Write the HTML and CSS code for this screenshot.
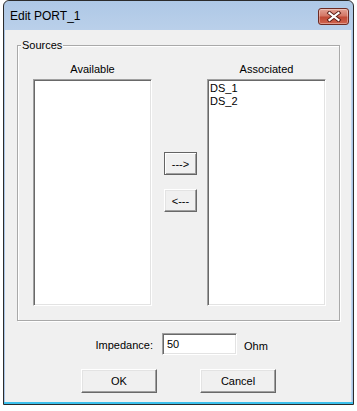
FILE: index.html
```html
<!DOCTYPE html>
<html lang="en">
<head>
    <meta charset="UTF-8">
    <meta name="viewport" content="width=device-width, initial-scale=1.0">
    <title>Edit PORT_1</title>
    <link rel="stylesheet" href="styles.css">
</head>
<body>
    <div class="window">
        <div class="titlebar">
            <span class="title">Edit PORT_1</span>
            <button class="close" type="button" aria-label="Close">
                <svg width="16" height="11" viewBox="0 0 16 11">
                    <path d="M3.5 2 L12.5 9 M12.5 2 L3.5 9" stroke="#5a1d16" stroke-width="4" stroke-linecap="square" fill="none"/>
                    <path d="M3.5 2 L12.5 9 M12.5 2 L3.5 9" stroke="#fff" stroke-width="2.2" stroke-linecap="square" fill="none"/>
                </svg>
            </button>
        </div>
        <div class="client">
            <div class="group">
                <span class="group-title">Sources</span>
                <div class="column">
                    <div class="col-label">Available</div>
                    <div class="listbox"></div>
                </div>
                <div class="mover">
                    <button class="btn small focused" type="button">---&gt;</button>
                    <button class="btn small" type="button">&lt;---</button>
                </div>
                <div class="column">
                    <div class="col-label">Associated</div>
                    <div class="listbox">
                        <div class="item">DS_1</div>
                        <div class="item">DS_2</div>
                    </div>
                </div>
            </div>
            <div class="impedance">
                <label class="imp-label" for="imp">Impedance:</label>
                <input class="field" id="imp" type="text" value="50">
                <span class="unit">Ohm</span>
            </div>
            <div class="actions">
                <button class="btn wide" type="button">OK</button>
                <button class="btn wide" type="button">Cancel</button>
            </div>
        </div>
    </div>
</body>
</html>
```

FILE: styles.css
```css
body {
    margin: 0;
    background: #fff;
    font-family: 'Liberation Sans', Arial, sans-serif;
    font-size: 11px;
    color: #000;
}
.window {
    box-sizing: border-box;
    width: 351px;
    height: 405px;
    margin-left: 3px;
    border: 1px solid #2b2b2b;
    border-radius: 6px 6px 0 0;
    background: linear-gradient(#b3cbe7, #a9c4e4 30px, #a9c4e4);
    padding: 0 1px 2px 1px;
    box-shadow: inset 0 -2px 0 #3cc0ec;
}
.titlebar {
    height: 29px;
    display: flex;
    align-items: center;
    justify-content: space-between;
    padding: 0 3px 0 5px;
    background: linear-gradient(#aec8e6, #bad0ea);
    border-radius: 5px 5px 0 0;
}
.title {
    font-size: 12px;
    color: #000;
    padding-top: 1px;
}
.close {
    box-sizing: border-box;
    width: 31px;
    height: 17px;
    margin-top: 2px;
    padding: 0;
    border: 1px solid #6d2a22;
    border-radius: 3px;
    background: linear-gradient(#e2a295, #d47766 45%, #c04a36 55%, #d0634e);
    box-shadow: inset 0 0 0 1px rgba(255, 255, 255, 0.35);
    display: flex;
    align-items: center;
    justify-content: center;
}
.client {
    box-sizing: border-box;
    height: 372px;
    background: #f0f0f0;
    padding-top: 15px;
    border-right: 1px solid #c3d7ee;
}
.group {
    position: relative;
    box-sizing: border-box;
    width: 323px;
    height: 276px;
    margin-left: 12px;
    border: 1px solid #a9a9a9;
    padding: 17px 13px 14px 15px;
    display: flex;
    box-shadow: 1px 1px 0 #fff, inset 1px 1px 0 #fff;
}
.group-title {
    position: absolute;
    top: -7px;
    left: 3px;
    padding: 0 1px;
    line-height: 13px;
    background: #f0f0f0;
}
.column {
    width: 119px;
    display: flex;
    flex-direction: column;
}
.col-label {
    line-height: 13px;
    height: 13px;
    margin-bottom: 3px;
    text-align: center;
}
.listbox {
    box-sizing: border-box;
    height: 227px;
    background: #fff;
    border-style: solid;
    border-width: 1px;
    border-color: #a0a0a0 #fff #fff #a0a0a0;
    box-shadow: inset 1px 1px 0 #696969, inset -1px -1px 0 #e3e3e3;
    padding: 2px 2px;
}
.item {
    line-height: 13px;
}
.mover {
    width: 33px;
    margin: 0 10px 0 12px;
    padding-top: 89px;
    display: flex;
    flex-direction: column;
    gap: 14px;
}
.btn {
    box-sizing: border-box;
    font-family: 'Liberation Sans', Arial, sans-serif;
    font-size: 11px;
    color: #000;
    background: #f0f0f0;
    border-style: solid;
    border-width: 1px;
    border-color: #fff #696969 #696969 #fff;
    box-shadow: inset -1px -1px 0 #a0a0a0, inset 1px 1px 0 #e3e3e3;
    padding: 0;
}
.btn.small {
    width: 33px;
    height: 23px;
}
.btn.focused {
    border-color: #646464;
    box-shadow: inset 1px 1px 0 #fff, inset -1px -1px 0 #a0a0a0;
}
.impedance {
    display: flex;
    align-items: center;
    margin-top: 12px;
    height: 22px;
}
.imp-label {
    width: 148px;
    text-align: right;
    margin-right: 9px;
    padding-top: 1px;
}
.field {
    box-sizing: border-box;
    width: 75px;
    height: 22px;
    margin: 0;
    padding: 0 0 0 4px;
    font-family: 'Liberation Sans', Arial, sans-serif;
    font-size: 11px;
    color: #000;
    background: #fff;
    border-style: solid;
    border-width: 1px;
    border-color: #a0a0a0 #fff #fff #a0a0a0;
    box-shadow: inset 1px 1px 0 #696969, inset -1px -1px 0 #e3e3e3;
    outline: none;
}
.unit {
    margin-left: 7px;
    padding-top: 4px;
}
.actions {
    display: flex;
    gap: 43px;
    margin-top: 14px;
    padding-left: 76px;
}
.btn.wide {
    width: 76px;
    height: 24px;
}
```
